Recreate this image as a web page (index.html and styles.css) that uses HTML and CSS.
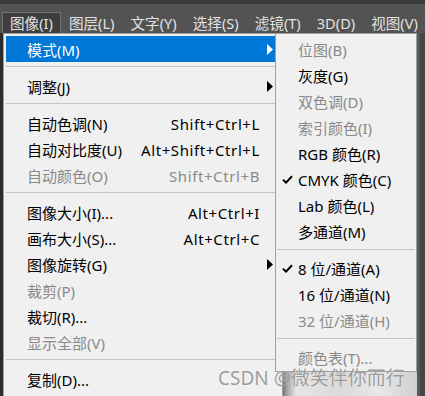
FILE: index.html
```html
<!DOCTYPE html>
<html lang="zh-CN">
<head>
<meta charset="utf-8">
<title>图像菜单</title>
<link rel="stylesheet" href="styles.css">
</head>
<body>
<div class="app">
  <div class="topstrip"></div>
  <nav class="menubar">
    <span class="mb-item active">图像(I)</span>
    <span class="mb-item">图层(L)</span>
    <span class="mb-item">文字(Y)</span>
    <span class="mb-item">选择(S)</span>
    <span class="mb-item">滤镜(T)</span>
    <span class="mb-item">3D(D)</span>
    <span class="mb-item">视图(V)</span>
  </nav>
  <div class="workspace">
    <div class="photo"></div>

    <div class="menu main-menu">
      <div class="row hl"><span class="label">模式(M)</span><span class="key"></span><span class="arrow"><svg viewBox="0 0 6 11" width="6" height="11"><polygon points="0,0 6,5.5 0,11"/></svg></span></div>
      <div class="sep"></div>
      <div class="row"><span class="label">调整(J)</span><span class="key"></span><span class="arrow"><svg viewBox="0 0 6 11" width="6" height="11"><polygon points="0,0 6,5.5 0,11"/></svg></span></div>
      <div class="sep"></div>
      <div class="row"><span class="label">自动色调(N)</span><span class="key">Shift+Ctrl+L</span><span class="arrow"></span></div>
      <div class="row"><span class="label">自动对比度(U)</span><span class="key">Alt+Shift+Ctrl+L</span><span class="arrow"></span></div>
      <div class="row off"><span class="label">自动颜色(O)</span><span class="key">Shift+Ctrl+B</span><span class="arrow"></span></div>
      <div class="sep"></div>
      <div class="row"><span class="label">图像大小(I)...</span><span class="key">Alt+Ctrl+I</span><span class="arrow"></span></div>
      <div class="row"><span class="label">画布大小(S)...</span><span class="key">Alt+Ctrl+C</span><span class="arrow"></span></div>
      <div class="row"><span class="label">图像旋转(G)</span><span class="key"></span><span class="arrow"><svg viewBox="0 0 6 11" width="6" height="11"><polygon points="0,0 6,5.5 0,11"/></svg></span></div>
      <div class="row off"><span class="label">裁剪(P)</span><span class="key"></span><span class="arrow"></span></div>
      <div class="row"><span class="label">裁切(R)...</span><span class="key"></span><span class="arrow"></span></div>
      <div class="row off"><span class="label">显示全部(V)</span><span class="key"></span><span class="arrow"></span></div>
      <div class="sep"></div>
      <div class="row"><span class="label">复制(D)...</span><span class="key"></span><span class="arrow"></span></div>
    </div>

    <div class="menu sub-menu">
      <div class="srow off"><span class="chk"></span><span class="label">位图(B)</span></div>
      <div class="srow"><span class="chk"></span><span class="label">灰度(G)</span></div>
      <div class="srow off"><span class="chk"></span><span class="label">双色调(D)</span></div>
      <div class="srow off"><span class="chk"></span><span class="label">索引颜色(I)</span></div>
      <div class="srow"><span class="chk"></span><span class="label">RGB 颜色(R)</span></div>
      <div class="srow"><span class="chk"><svg viewBox="0 0 11 9" width="11" height="9"><path d="M1 4.6 L4 7.6 L10 1.2"/></svg></span><span class="label">CMYK 颜色(C)</span></div>
      <div class="srow"><span class="chk"></span><span class="label">Lab 颜色(L)</span></div>
      <div class="srow"><span class="chk"></span><span class="label">多通道(M)</span></div>
      <div class="ssep"></div>
      <div class="srow"><span class="chk"><svg viewBox="0 0 11 9" width="11" height="9"><path d="M1 4.6 L4 7.6 L10 1.2"/></svg></span><span class="label">8 位/通道(A)</span></div>
      <div class="srow"><span class="chk"></span><span class="label">16 位/通道(N)</span></div>
      <div class="srow off"><span class="chk"></span><span class="label">32 位/通道(H)</span></div>
      <div class="ssep"></div>
      <div class="srow off"><span class="chk"></span><span class="label">颜色表(T)...</span></div>
    </div>

    <div class="watermark">CSDN @微笑伴你而行</div>
  </div>
</div>
</body>
</html>
```

FILE: styles.css
```css
html, body {
  margin: 0;
  padding: 0;
}
body {
  width: 425px;
  height: 396px;
  overflow: hidden;
  background: #3a3a3a;
  font-family: "Noto Sans", "Noto Sans CJK SC", sans-serif;
  font-size: 15px;
}
.app {
  width: 425px;
  height: 396px;
  display: flex;
  flex-direction: column;
}
.topstrip {
  height: 4px;
  background: #3c3c3c;
}
.menubar {
  height: 29px;
  background: #535353;
  display: flex;
  align-items: flex-end;
  padding-left: 2px;
  font-size: 14.6px;
}
.mb-item {
  height: 20px;
  line-height: 20px;
  padding: 0 7px;
  border: 1px solid transparent;
  border-bottom: none;
  color: #e2e2e2;
  white-space: nowrap;
}
.mb-item.active {
  background: #3e3e3e;
  border-color: #737373;
}
.workspace {
  flex: 1;
  position: relative;
  background: linear-gradient(to right, #2c2c2c 0, #2c2c2c 3px, #585858 3px, #585858 420px, #464646 420px);
}
.photo {
  position: absolute;
  left: 280px;
  top: 339px;
  width: 137px;
  height: 30px;
  background:
    linear-gradient(to right, #4a4a4a 0, #9a9a9a 6px, #e6e6e6 16px, #dadada 60px, #e8e8e8 100px, #cfcfcf 137px);
}
.menu {
  position: absolute;
  top: 0;
  background: #f0f0f0;
  border: 1px solid #a0a0a0;
  color: #000;
}
.main-menu {
  left: 3px;
  width: 274px;
  height: 400px;
  padding: 2px 2px 0 2px;
  border-bottom: none;
}
.row {
  height: 26px;
  display: grid;
  grid-template-columns: 1fr auto 20px;
  align-items: center;
  padding-left: 21px;
  white-space: nowrap;
}
.row .label, .srow .label {
  line-height: 26px;
  position: relative;
  top: 1px;
}
.row .key {
  line-height: 26px;
  position: relative;
  top: 1px;
  letter-spacing: 0.6px;
}
.row .arrow {
  display: flex;
  align-items: center;
  justify-content: center;
}
.row .arrow svg {
  fill: #000;
  display: block;
}
.row.hl {
  background: #0078d7;
  color: #fff;
}
.row.hl .arrow svg {
  fill: #fff;
}
.off {
  color: #8a8a8a;
}
.sep {
  height: 1px;
  background: #c4c4c4;
  margin: 4px 0 6px 0;
}
.sub-menu {
  left: 275px;
  width: 140px;
  padding: 2px 0 1px 0;
}
.srow {
  height: 26px;
  display: grid;
  grid-template-columns: 22px 1fr;
  align-items: center;
  white-space: nowrap;
}
.chk {
  display: flex;
  align-items: center;
  justify-content: center;
}
.chk svg {
  display: block;
  fill: none;
  stroke: #000;
  stroke-width: 2;
}
.ssep {
  height: 1px;
  background: #c4c4c4;
  margin: 5px 1px 5px 1px;
}
.watermark {
  position: absolute;
  left: 218px;
  top: 333px;
  font-family: "Noto Sans", "Noto Sans CJK SC", sans-serif;
  font-size: 19px;
  line-height: 24px;
  color: rgba(140, 140, 140, 0.85);
  text-shadow: 0 0 1px rgba(255, 255, 255, 0.6);
  white-space: nowrap;
}
```
